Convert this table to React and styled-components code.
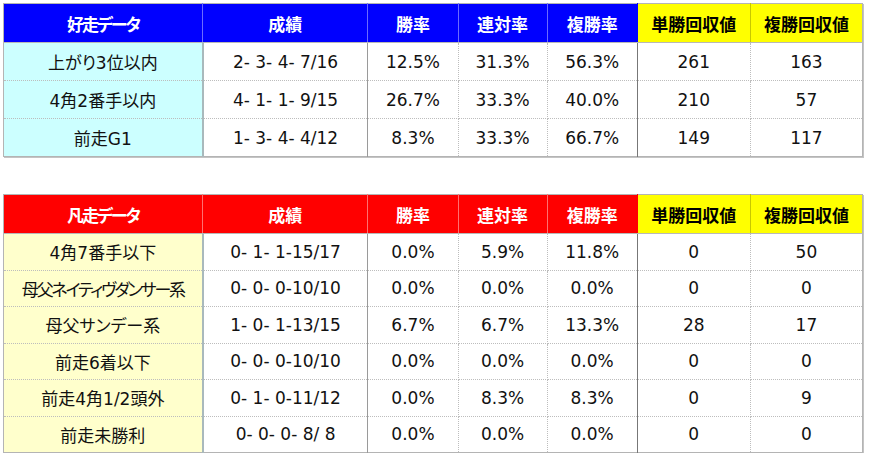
import React from "react";
import styled, { createGlobalStyle } from "styled-components";

const Global = createGlobalStyle`
  html, body { margin: 0; padding: 0; background: #ffffff; }
  body {
    font-family: "DejaVu Sans", "Noto Sans CJK JP", sans-serif;
    font-feature-settings: "palt";
  }
`;

const Page = styled.div`
  display: flex;
  flex-direction: column;
  gap: 37px;
  padding: 3px 0 0 3px;
  width: 870px;
  box-sizing: border-box;
`;

const Table = styled.table`
  border-collapse: collapse;
  table-layout: fixed;
  width: 860px;
  border: 1px solid #b4b4b4;
  box-shadow: 1px 1px 0 #c4c4c4;
`;

const widths = [199, 165, 90, 89, 90, 113, 112];

const HeadRow = styled.tr`
  height: 39px;
`;

const HeadCell = styled.th`
  padding: 0;
  font-size: 17px;
  font-weight: bold;
  text-align: center;
  letter-spacing: ${(p) => (p.$tight ? "-2px" : "0")};
  color: ${(p) => (p.$yellow ? "#000000" : "#ffffff")};
  background: ${(p) => (p.$yellow ? "#ffff00" : p.$bg)};
  border-right: 1px solid ${(p) => (p.$yellow ? "#c8c800" : p.$line)};
  border-bottom: 1px solid #b8b8b8;
  &:last-child { border-right: none; }
`;

const BodyRow = styled.tr`
  height: ${(p) => p.$h}px;
`;

const rightBorders = [
  "2px solid #a9b9bc",
  "1px solid #9a9a9a",
  "1px dotted #bdbdbd",
  "1px dotted #bdbdbd",
  "1px solid #777777",
  "1px dotted #bdbdbd",
  "none",
];

const BodyCell = styled.td`
  padding: 0;
  font-size: 17px;
  color: #111111;
  text-align: center;
  white-space: pre;
  letter-spacing: ${(p) => (p.$tight ? "-2.2px" : "0")};
  background: ${(p) => p.$bg || "#ffffff"};
  border-right: ${(p) => rightBorders[p.$col]};
  border-bottom: 1px dotted #bdbdbd;
  tr:last-child > & { border-bottom: none; }
`;

const headers = ["成績", "勝率", "連対率", "複勝率", "単勝回収値", "複勝回収値"];

const good = [
  ["上がり3位以内", "2- 3- 4- 7/16", "12.5%", "31.3%", "56.3%", "261", "163"],
  ["4角2番手以内", "4- 1- 1- 9/15", "26.7%", "33.3%", "40.0%", "210", "57"],
  ["前走G1", "1- 3- 4- 4/12", "8.3%", "33.3%", "66.7%", "149", "117"],
];

const bad = [
  ["4角7番手以下", "0- 1- 1-15/17", "0.0%", "5.9%", "11.8%", "0", "50"],
  ["母父ネイティヴダンサー系", "0- 0- 0-10/10", "0.0%", "0.0%", "0.0%", "0", "0"],
  ["母父サンデー系", "1- 0- 1-13/15", "6.7%", "6.7%", "13.3%", "28", "17"],
  ["前走6着以下", "0- 0- 0-10/10", "0.0%", "0.0%", "0.0%", "0", "0"],
  ["前走4角1/2頭外", "0- 1- 0-11/12", "0.0%", "8.3%", "8.3%", "0", "9"],
  ["前走未勝利", "0- 0- 0- 8/ 8", "0.0%", "0.0%", "0.0%", "0", "0"],
];

const isKanaHeavy = (s) => (s.match(/[\u30A0-\u30FF]/g) || []).length >= 6;

function DataTable({ title, headBg, headLine, nameBg, rows, rowH }) {
  return (
    <Table>
      <colgroup>
        {widths.map((w, i) => (
          <col key={i} style={{ width: w }} />
        ))}
      </colgroup>
      <thead>
        <HeadRow>
          <HeadCell $bg={headBg} $line={headLine} $tight>
            {title}
          </HeadCell>
          {headers.map((h, i) => (
            <HeadCell
              key={h}
              $bg={headBg}
              $line={i === 3 ? headBg : headLine}
              $yellow={i >= 4}
            >
              {h}
            </HeadCell>
          ))}
        </HeadRow>
      </thead>
      <tbody>
        {rows.map((r, ri) => (
          <BodyRow key={ri} $h={rowH}>
            {r.map((c, ci) => (
              <BodyCell
                key={ci}
                $col={ci}
                $bg={ci === 0 ? nameBg : undefined}
                $tight={ci === 0 && isKanaHeavy(c)}
              >
                {c}
              </BodyCell>
            ))}
          </BodyRow>
        ))}
      </tbody>
    </Table>
  );
}

export default function App() {
  return (
    <>
      <Global />
      <Page>
        <DataTable
          title="好走データ"
          headBg="#0000ff"
          headLine="#6b6bff"
          nameBg="#ccffff"
          rows={good}
          rowH={38}
        />
        <DataTable
          title="凡走データ"
          headBg="#ff0000"
          headLine="#ff7070"
          nameBg="#ffffcc"
          rows={bad}
          rowH={36.5}
        />
      </Page>
    </>
  );
}
